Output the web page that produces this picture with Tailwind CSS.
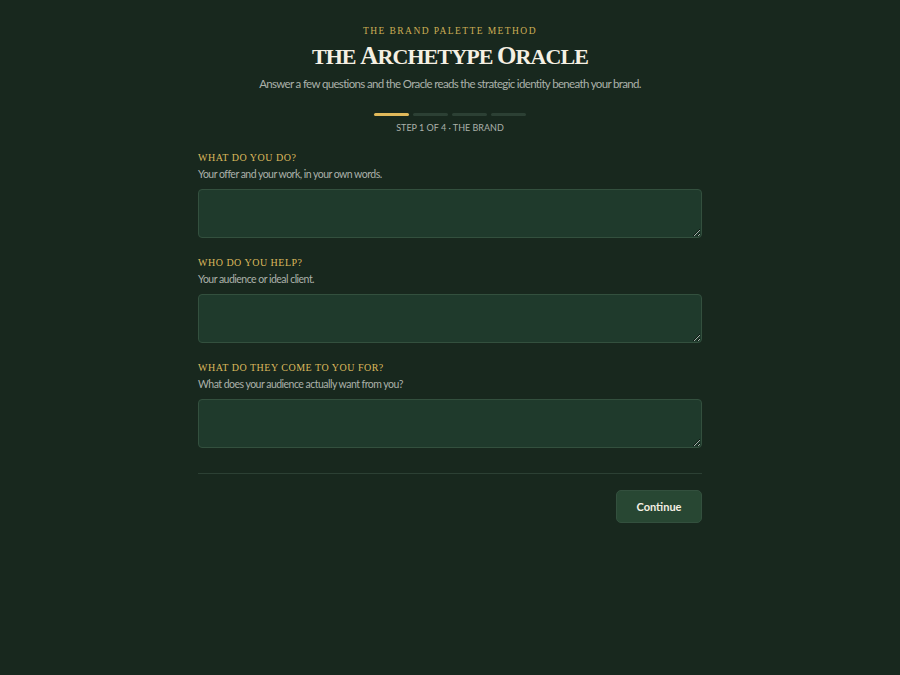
<!doctype html>
<html lang="en">
  <head>
    <title>The Archetype Oracle</title>
    <meta charset="UTF-8" />
    <meta name="viewport" content="width=device-width, initial-scale=1" />
    <script src="https://cdn.jsdelivr.net/npm/@tailwindcss/browser@4"></script>
  </head>
  <body class="bg-[#18281e] min-h-[675px] font-[Lato,sans-serif]">
    <div class="w-[504px] mx-auto pt-[24px]">
      <div class="text-center">
        <p class="font-['Liberation_Serif',serif] text-[9.5px] leading-[14px] tracking-[1.42px] text-[#cdae55]">THE BRAND PALETTE METHOD</p>
        <h1 class="font-['Liberation_Serif',serif] font-bold text-[22px] leading-[32px] mt-[2px] text-[#f5f0e3] tracking-[-0.9px]">THE <span class="text-[25px]">A</span>RCHETYPE <span class="text-[25px]">O</span>RACLE</h1>
        <p class="text-[11.5px] leading-[16px] mt-[3px] text-[#abb1aa] tracking-[-0.66px]">Answer a few questions and the Oracle reads the strategic identity beneath your brand.</p>
      </div>

      <div class="flex justify-center gap-[4px] mt-[21px]">
        <div class="w-[35px] h-[3px] rounded-full bg-[#e0b95a]"></div>
        <div class="w-[35px] h-[3px] rounded-full bg-[#2c4034]"></div>
        <div class="w-[35px] h-[3px] rounded-full bg-[#2c4034]"></div>
        <div class="w-[35px] h-[3px] rounded-full bg-[#2c4034]"></div>
      </div>
      <p class="text-center text-[9px] leading-[12px] mt-[6px] text-[#abb1aa]">STEP 1 OF 4 · THE BRAND</p>

      <form class="mt-[17px]" onsubmit="event.preventDefault()">
        <div class="flex flex-col gap-[18px]">
          <div>
            <label class="block font-['Liberation_Serif',serif] text-[10px] leading-[14px] tracking-[0.05em] text-[#dcb85c]">WHAT DO YOU DO?</label>
            <p class="text-[10.5px] leading-[14px] mt-[2px] text-[#abb1aa] tracking-[-0.52px]">Your offer and your work, in your own words.</p>
            <textarea class="block w-full h-[49px] mt-[8px] bg-[#1f3a2c] border border-[#33503e] rounded-[4px]"></textarea>
          </div>
          <div>
            <label class="block font-['Liberation_Serif',serif] text-[10px] leading-[14px] tracking-[0.05em] text-[#dcb85c]">WHO DO YOU HELP?</label>
            <p class="text-[10.5px] leading-[14px] mt-[2px] text-[#abb1aa] tracking-[-0.52px]">Your audience or ideal client.</p>
            <textarea class="block w-full h-[49px] mt-[8px] bg-[#1f3a2c] border border-[#33503e] rounded-[4px]"></textarea>
          </div>
          <div>
            <label class="block font-['Liberation_Serif',serif] text-[10px] leading-[14px] tracking-[0.05em] text-[#dcb85c]">WHAT DO THEY COME TO YOU FOR?</label>
            <p class="text-[10.5px] leading-[14px] mt-[2px] text-[#abb1aa] tracking-[-0.52px]">What does your audience actually want from you?</p>
            <textarea class="block w-full h-[49px] mt-[8px] bg-[#1f3a2c] border border-[#33503e] rounded-[4px]"></textarea>
          </div>
        </div>

        <div class="mt-[25px] pt-[16px] border-t border-[#2c4034] flex justify-end">
          <button type="submit" class="w-[86px] h-[33px] pt-[2px] bg-[#284733] border border-[#33503e] rounded-[5px] text-[11px] font-bold text-[#f5f0e3]">Continue</button>
        </div>
      </form>
    </div>
  </body>
</html>
